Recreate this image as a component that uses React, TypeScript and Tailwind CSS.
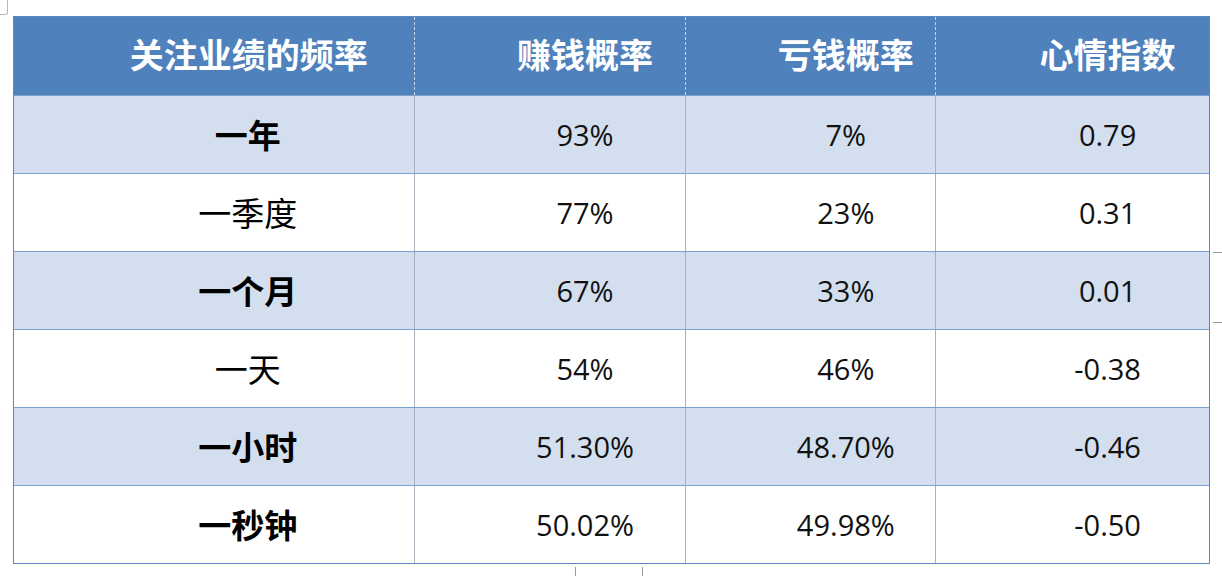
import React from "react";

const cols = ["w-[401px]", "w-[272px]", "w-[250px]", "w-[273px]"];

const rows: { label: string; bold: boolean; a: string; b: string; c: string }[] = [
  { label: "一年", bold: true, a: "93%", b: "7%", c: "0.79" },
  { label: "一季度", bold: false, a: "77%", b: "23%", c: "0.31" },
  { label: "一个月", bold: true, a: "67%", b: "33%", c: "0.01" },
  { label: "一天", bold: false, a: "54%", b: "46%", c: "-0.38" },
  { label: "一小时", bold: true, a: "51.30%", b: "48.70%", c: "-0.46" },
  { label: "一秒钟", bold: true, a: "50.02%", b: "49.98%", c: "-0.50" },
];

const cjk = "font-['Noto_Sans_CJK_SC','Noto_Sans',sans-serif]";
const num = "font-['Open_Sans','Liberation_Sans',sans-serif]";

export default function App() {
  const headers = ["关注业绩的频率", "赚钱概率", "亏钱概率", "心情指数"];
  return (
    <div className="relative w-[1222px] h-[576px] bg-white overflow-hidden pt-[16px] pl-[13px]">
      {/* screenshot artifacts */}
      <div className="absolute left-0 top-0 w-[8px] h-[15px] border-r border-b border-[#b8b8b8] rounded-br-[3px]" />
      <div className="absolute left-[1213px] top-[252px] w-[9px] h-[71px] border-t border-b border-[#9a9a9a]" />
      <div className="absolute left-[575px] top-[567px] w-[68px] h-[9px] border-l border-r border-[#9a9a9a]" />

      <div className="w-[1197px] border border-[#5b87c0]">
        {/* header */}
        <div className="flex h-[78px] bg-[#4f81bd]">
          {headers.map((h, i) => (
            <div
              key={h}
              className={`${cols[i]} ${i < 3 ? "border-r border-dashed border-[#c9d5e8]" : ""} flex items-center justify-center pl-[70px] pb-[4px] text-white font-bold text-[34px] leading-none ${cjk}`}
            >
              {h}
            </div>
          ))}
        </div>
        {rows.map((r, ri) => (
          <div
            key={r.label}
            className={`flex h-[78px] border-t border-[#7c9fd0] ${ri % 2 === 0 ? "bg-[#d3dfee]" : "bg-white"}`}
          >
            <div
              className={`${cols[0]} border-r border-[#a8b2bf] flex items-center justify-center pl-[68px] text-[33px] leading-none text-black ${r.bold ? "font-semibold" : "font-normal"} ${cjk}`}
            >
              {r.label}
            </div>
            {[r.a, r.b, r.c].map((v, ci) => (
              <div
                key={ci}
                className={`${cols[ci + 1]} ${ci < 2 ? "border-r border-[#a8b2bf]" : ""} flex items-center justify-center pl-[70px] text-[29px] leading-none text-[#111] ${num}`}
              >
                {v}
              </div>
            ))}
          </div>
        ))}
      </div>
    </div>
  );
}
